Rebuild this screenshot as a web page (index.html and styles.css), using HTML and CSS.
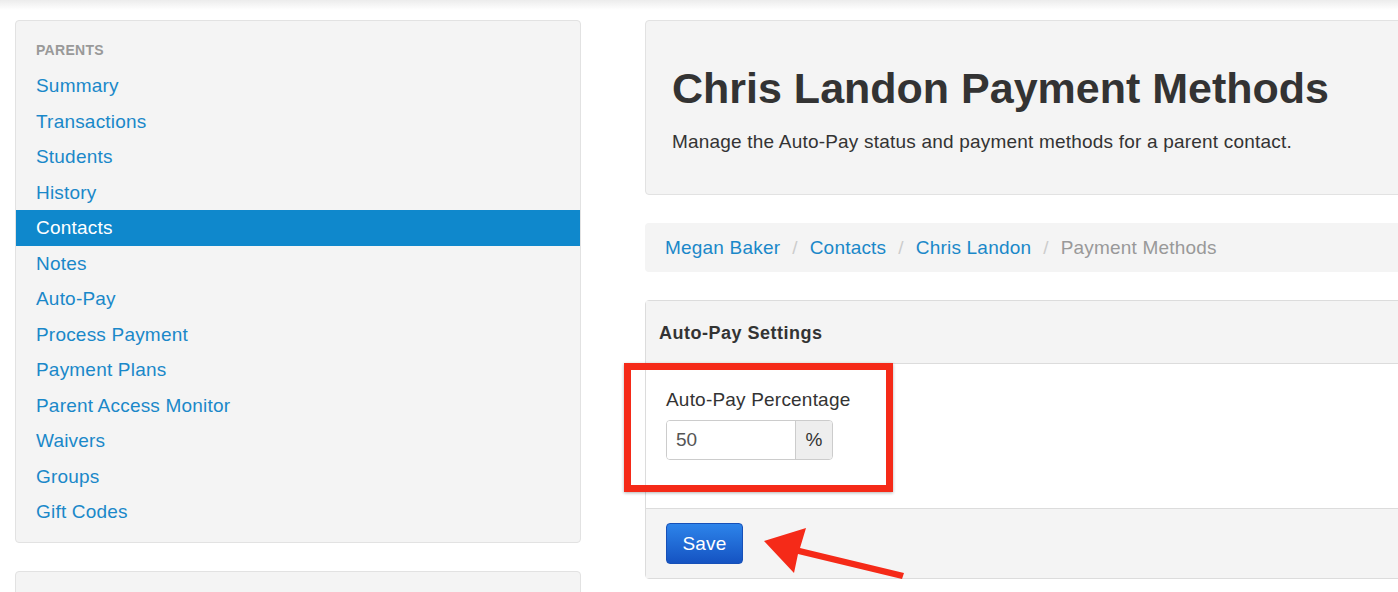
FILE: index.html
```html
<!DOCTYPE html>
<html lang="en">
<head>
    <meta charset="UTF-8">
    <meta name="viewport" content="width=device-width, initial-scale=1.0">
    <title>Payment Methods</title>

    <link rel="stylesheet" href="styles.css">
</head>
<body>

    <div class="page">

        <!-- sidebar start -->
        <aside class="sidebar">
            <div class="well nav-box">
                <p class="nav-header">Parents</p>
                <ul>
                    <li><a href="#">Summary</a></li>
                    <li><a href="#">Transactions</a></li>
                    <li><a href="#">Students</a></li>
                    <li><a href="#">History</a></li>
                    <li class="active"><a href="#">Contacts</a></li>
                    <li><a href="#">Notes</a></li>
                    <li><a href="#">Auto-Pay</a></li>
                    <li><a href="#">Process Payment</a></li>
                    <li><a href="#">Payment Plans</a></li>
                    <li><a href="#">Parent Access Monitor</a></li>
                    <li><a href="#">Waivers</a></li>
                    <li><a href="#">Groups</a></li>
                    <li><a href="#">Gift Codes</a></li>
                </ul>
            </div>
            <div class="well nav-box second"></div>
        </aside>
        <!-- sidebar end -->

        <main class="content">
            <div class="jumbotron">
                <h1>Chris Landon Payment Methods</h1>
                <p>Manage the Auto-Pay status and payment methods for a parent contact.</p>
            </div>

            <ul class="breadcrumb">
                <li><a href="#">Megan Baker</a></li>
                <li><a href="#">Contacts</a></li>
                <li><a href="#">Chris Landon</a></li>
                <li class="current">Payment Methods</li>
            </ul>

            <form class="panel">
                <div class="panel-heading">Auto-Pay Settings</div>
                <div class="panel-body">
                    <label for="percent">Auto-Pay Percentage</label>
                    <div class="input-group">
                        <input type="text" id="percent" value="50">
                        <span class="addon">%</span>
                    </div>
                </div>
                <div class="panel-footer">
                    <button type="submit">Save</button>
                </div>

                <!-- screenshot annotations -->
                <div class="highlight"></div>
                <svg class="arrow" width="180" height="92" viewBox="0 0 180 92">
                    <polygon points="23,40 65,27 59,47 163,72 161,78 57,53 53,72" fill="#f52a18"/>
                </svg>
            </form>
        </main>
    </div>

</body>
</html>
```

FILE: styles.css
```css
* {
    padding: 0;
    margin: 0;
    box-sizing: border-box;
    font-family: "Liberation Sans", Arial, sans-serif;
}

html {
    overflow: hidden;
}

body {
    background: linear-gradient(#ececec 0px, #ffffff 10px) no-repeat;
    background-color: #fff;
    color: #333;
    letter-spacing: 0.2px;
}

a {
    text-decoration: none;
    color: #1a88c9;
}

ul {
    list-style: none;
}

.page {
    display: flex;
    gap: 64px;
    padding: 20px 0 0 15px;
    width: 1500px;
}

.well {
    background-color: #f4f4f4;
    border: 1px solid #e2e2e2;
    border-radius: 4px;
}

.sidebar {
    width: 566px;
    flex: 0 0 566px;
}

.nav-box {
    padding: 19px 0 12px 0;

    .nav-header {
        font-size: 14px;
        font-weight: 700;
        line-height: 20px;
        letter-spacing: 0.3px;
        color: #999;
        text-transform: uppercase;
        padding: 0 20px;
        margin-bottom: 8px;
    }

    li a {
        display: block;
        font-size: 19px;
        line-height: 35.5px;
        padding: 0 20px;
    }

    li.active a {
        background-color: #0f88cc;
        color: #fff;
    }
}

.nav-box.second {
    margin-top: 28px;
    height: 60px;
}

.content {
    width: 820px;
    flex: 0 0 820px;
}

.jumbotron {
    height: 175px;
    padding: 43px 26px 0 26px;
    background-color: #f4f4f4;
    border: 1px solid #e2e2e2;
    border-radius: 4px;

    h1 {
        font-size: 43px;
        line-height: 48px;
        font-weight: 700;
        letter-spacing: 0;
        color: #333;
    }

    p {
        font-size: 19px;
        line-height: 26px;
        margin-top: 17px;
    }
}

.breadcrumb {
    display: flex;
    margin-top: 28px;
    height: 49px;
    padding: 1px 20px 0 20px;
    align-items: center;
    background-color: #f4f4f4;
    border-radius: 4px;
    font-size: 19px;

    li + li::before {
        content: "/";
        color: #ccc;
        padding: 0 12px;
    }

    .current {
        color: #999;
    }
}

.panel {
    position: relative;
    margin-top: 28px;
    border: 1px solid #dcdcdc;
    border-radius: 4px;

    .panel-heading {
        height: 63px;
        line-height: 64px;
        padding: 0 13px;
        font-size: 18px;
        font-weight: 700;
        letter-spacing: 0.5px;
        background-color: #f4f4f4;
        border-bottom: 1px solid #dcdcdc;
    }

    .panel-body {
        background-color: #fff;
        padding: 25px 20px 48px 20px;

        label {
            display: block;
            font-size: 19px;
            line-height: 22px;
            margin-bottom: 9px;
        }
    }

    .input-group {
        display: flex;
        width: 167px;
        height: 40px;
        border: 1px solid #ccc;
        border-radius: 4px;
        overflow: hidden;

        input {
            width: 129px;
            border: none;
            border-right: 1px solid #ccc;
            padding: 0 9px;
            font-size: 19px;
            color: #555;
            outline: none;
        }

        .addon {
            flex: 1;
            display: flex;
            align-items: center;
            justify-content: center;
            font-size: 19px;
            background-color: #eee;
            color: #333;
        }
    }

    .panel-footer {
        padding: 14px 20px 14px 20px;
        background-color: #f4f4f4;
        border-top: 1px solid #dcdcdc;

        button {
            width: 77px;
            height: 41px;
            border: 1px solid #1650b8;
            border-radius: 4px;
            background: linear-gradient(#2d84ea, #1553c2);
            color: #fff;
            font-size: 19px;
            letter-spacing: 0.2px;
        }
    }

    .highlight {
        position: absolute;
        left: -22px;
        top: 62px;
        width: 269px;
        height: 129px;
        border: 7px solid #f52a18;
        box-shadow: 0 1px 3px rgba(0, 0, 0, 0.3);
    }

    .arrow {
        position: absolute;
        left: 95px;
        top: 200px;
    }
}
```
